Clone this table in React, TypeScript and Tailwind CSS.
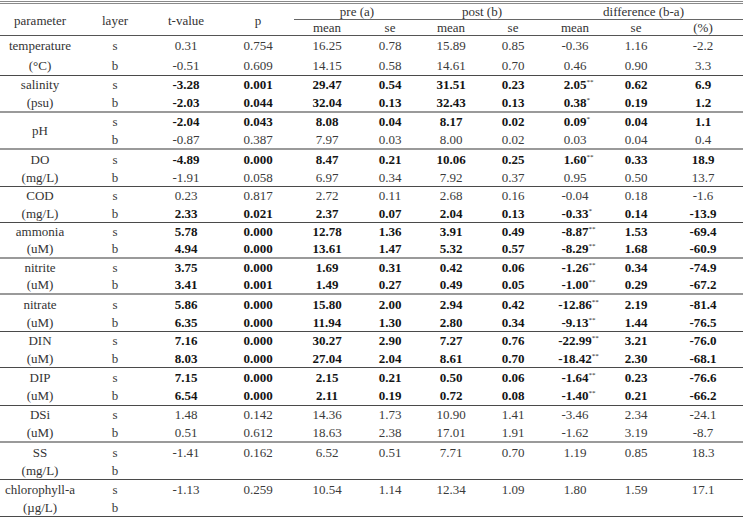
import React from "react";

type Row = { l: string; b: boolean; v: string[] };
type Group = { name: string[]; h: number; line: "dark" | "gray"; rows: Row[] };

const G: Group[] = [
  { name: ["temperature", "(°C)"], h: 40, line: "dark", rows: [
    { l: "s", b: false, v: ["0.31", "0.754", "16.25", "0.78", "15.89", "0.85", "-0.36", "1.16", "-2.2"] },
    { l: "b", b: false, v: ["-0.51", "0.609", "14.15", "0.58", "14.61", "0.70", "0.46", "0.90", "3.3"] } ] },
  { name: ["salinity", "(psu)"], h: 37, line: "gray", rows: [
    { l: "s", b: true, v: ["-3.28", "0.001", "29.47", "0.54", "31.51", "0.23", "2.05**", "0.62", "6.9"] },
    { l: "b", b: true, v: ["-2.03", "0.044", "32.04", "0.13", "32.43", "0.13", "0.38*", "0.19", "1.2"] } ] },
  { name: ["pH"], h: 37, line: "gray", rows: [
    { l: "s", b: true, v: ["-2.04", "0.043", "8.08", "0.04", "8.17", "0.02", "0.09*", "0.04", "1.1"] },
    { l: "b", b: false, v: ["-0.87", "0.387", "7.97", "0.03", "8.00", "0.02", "0.03", "0.04", "0.4"] } ] },
  { name: ["DO", "(mg/L)"], h: 37, line: "dark", rows: [
    { l: "s", b: true, v: ["-4.89", "0.000", "8.47", "0.21", "10.06", "0.25", "1.60**", "0.33", "18.9"] },
    { l: "b", b: false, v: ["-1.91", "0.058", "6.97", "0.34", "7.92", "0.37", "0.95", "0.50", "13.7"] } ] },
  { name: ["COD", "(mg/L)"], h: 36, line: "dark", rows: [
    { l: "s", b: false, v: ["0.23", "0.817", "2.72", "0.11", "2.68", "0.16", "-0.04", "0.18", "-1.6"] },
    { l: "b", b: true, v: ["2.33", "0.021", "2.37", "0.07", "2.04", "0.13", "-0.33*", "0.14", "-13.9"] } ] },
  { name: ["ammonia", "(uM)"], h: 36, line: "gray", rows: [
    { l: "s", b: true, v: ["5.78", "0.000", "12.78", "1.36", "3.91", "0.49", "-8.87**", "1.53", "-69.4"] },
    { l: "b", b: true, v: ["4.94", "0.000", "13.61", "1.47", "5.32", "0.57", "-8.29**", "1.68", "-60.9"] } ] },
  { name: ["nitrite", "(uM)"], h: 36, line: "gray", rows: [
    { l: "s", b: true, v: ["3.75", "0.000", "1.69", "0.31", "0.42", "0.06", "-1.26**", "0.34", "-74.9"] },
    { l: "b", b: true, v: ["3.41", "0.001", "1.49", "0.27", "0.49", "0.05", "-1.00**", "0.29", "-67.2"] } ] },
  { name: ["nitrate", "(uM)"], h: 37, line: "dark", rows: [
    { l: "s", b: true, v: ["5.86", "0.000", "15.80", "2.00", "2.94", "0.42", "-12.86**", "2.19", "-81.4"] },
    { l: "b", b: true, v: ["6.35", "0.000", "11.94", "1.30", "2.80", "0.34", "-9.13**", "1.44", "-76.5"] } ] },
  { name: ["DIN", "(uM)"], h: 36, line: "dark", rows: [
    { l: "s", b: true, v: ["7.16", "0.000", "30.27", "2.90", "7.27", "0.76", "-22.99**", "3.21", "-76.0"] },
    { l: "b", b: true, v: ["8.03", "0.000", "27.04", "2.04", "8.61", "0.70", "-18.42**", "2.30", "-68.1"] } ] },
  { name: ["DIP", "(uM)"], h: 38, line: "dark", rows: [
    { l: "s", b: true, v: ["7.15", "0.000", "2.15", "0.21", "0.50", "0.06", "-1.64**", "0.23", "-76.6"] },
    { l: "b", b: true, v: ["6.54", "0.000", "2.11", "0.19", "0.72", "0.08", "-1.40**", "0.21", "-66.2"] } ] },
  { name: ["DSi", "(uM)"], h: 37, line: "gray", rows: [
    { l: "s", b: false, v: ["1.48", "0.142", "14.36", "1.73", "10.90", "1.41", "-3.46", "2.34", "-24.1"] },
    { l: "b", b: false, v: ["0.51", "0.612", "18.63", "2.38", "17.01", "1.91", "-1.62", "3.19", "-8.7"] } ] },
  { name: ["SS", "(mg/L)"], h: 37, line: "dark", rows: [
    { l: "s", b: false, v: ["-1.41", "0.162", "6.52", "0.51", "7.71", "0.70", "1.19", "0.85", "18.3"] },
    { l: "b", b: false, v: ["", "", "", "", "", "", "", "", ""] } ] },
  { name: ["chlorophyll-a", "(µg/L)"], h: 37, line: "dark", rows: [
    { l: "s", b: false, v: ["-1.13", "0.259", "10.54", "1.14", "12.34", "1.09", "1.80", "1.59", "17.1"] },
    { l: "b", b: false, v: ["", "", "", "", "", "", "", "", ""] } ] },
];

const cols = "grid grid-cols-[80px_70px_72px_72px_66px_60px_62px_62px_62px_60px_74px]";

function Val({ t, bold }: { t: string; bold: boolean }) {
  const m = t.match(/^([^*]*)(\*+)$/);
  const num = m ? m[1] : t;
  const stars = m ? m[2] : "";
  return (
    <div className={`flex items-center justify-center ${bold ? "font-bold text-[#141414]" : "text-[#3a3a3a]"}`}>
      <span className="relative">
        {num}
        {stars && (
          <span className="absolute left-full top-[1px] text-[7px] leading-none font-normal">{stars}</span>
        )}
      </span>
    </div>
  );
}

export default function App() {
  return (
    <div
      className="w-[743px] h-[520px] bg-white text-[13px] leading-none text-[#333]"
      style={{ fontFamily: '"Liberation Serif", "Times New Roman", serif' }}
    >
      <div className="pt-[1px]">
        <div className="h-[3px] border-y border-[#8a8a8a]" />
      </div>
      {/* header */}
      <div className={`${cols} h-[32px] border-b border-[#555]`}>
        <div className="row-span-2 flex items-center justify-center pt-[1px]">parameter</div>
        <div className="row-span-2 flex items-center justify-center pt-[1px]">layer</div>
        <div className="row-span-2 flex items-center justify-center pt-[1px]">t-value</div>
        <div className="row-span-2 flex items-center justify-center pt-[1px]">p</div>
        <div className="col-span-2 flex items-center justify-center border-b border-[#666] h-[16px]">pre (a)</div>
        <div className="col-span-2 flex items-center justify-center border-b border-[#666] h-[16px]">post (b)</div>
        <div className="col-span-3 flex items-center justify-center border-b border-[#666] h-[16px] mr-[-3px]">difference (b-a)</div>
        <div className="flex items-center justify-center h-[15px]">mean</div>
        <div className="flex items-center justify-center h-[15px]">se</div>
        <div className="flex items-center justify-center h-[15px]">mean</div>
        <div className="flex items-center justify-center h-[15px]">se</div>
        <div className="flex items-center justify-center h-[15px]">mean</div>
        <div className="flex items-center justify-center h-[15px]">se</div>
        <div className="flex items-center justify-center h-[15px]">(%)</div>
      </div>
      {G.map((g, gi) => {
        const last = gi === G.length - 1;
        const border =
          g.line === "gray" ? "border-b-2 border-[#9a9a9a]" : "border-b border-[#4a4a4a]";
        return (
          <div
            key={gi}
            className={`${cols} grid-rows-2 ${last ? "border-b border-[#4a4a4a]" : border}`}
            style={{ height: g.h }}
          >
            <div className="row-span-2 flex flex-col justify-center text-[#333]">
              {g.name.length === 1 ? (
                <div className="text-center">{g.name[0]}</div>
              ) : (
                <>
                  <div className="flex-1 flex items-center justify-center">{g.name[0]}</div>
                  <div className="flex-1 flex items-center justify-center">{g.name[1]}</div>
                </>
              )}
            </div>
            {g.rows.map((r, ri) => (
              <React.Fragment key={ri}>
                <div
                  className="flex items-center justify-center text-[#3a3a3a]"
                  style={{ gridRow: ri + 1, gridColumn: 2 }}
                >
                  {r.l}
                </div>
                {r.v.map((t, ci) => (
                  <div key={ci} style={{ gridRow: ri + 1, gridColumn: ci + 3 }} className="flex">
                    <div className="flex-1 flex items-center justify-center">
                      <Val t={t} bold={r.b} />
                    </div>
                  </div>
                ))}
              </React.Fragment>
            ))}
          </div>
        );
      })}
    </div>
  );
}
